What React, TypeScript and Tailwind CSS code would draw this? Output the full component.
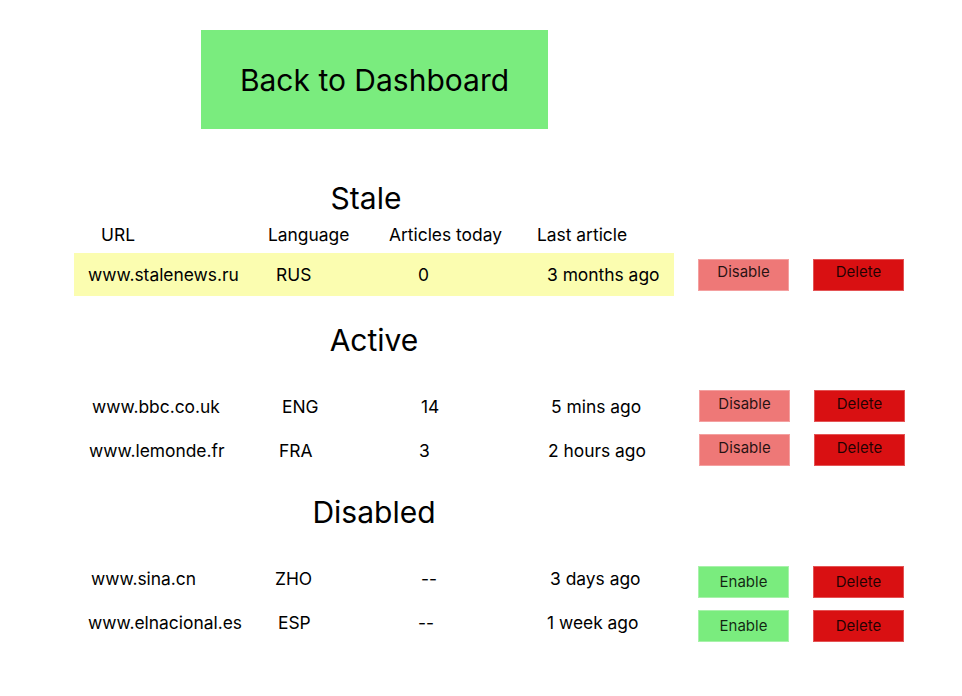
import React from 'react';

type Row = {
  url: string;
  lang: string;
  count: string;
  last: string;
  // per-cell left padding, the wireframe isn't perfectly aligned
  pads: [string, string, string, string];
};

const staleRows: Row[] = [
  { url: 'www.stalenews.ru', lang: 'RUS', count: '0', last: '3 months ago', pads: ['pl-[14px]', 'pl-[14px]', 'pl-[36px]', 'pl-[25px]'] },
];

const activeRows: Row[] = [
  { url: 'www.bbc.co.uk', lang: 'ENG', count: '14', last: '5 mins ago', pads: ['pl-[17px]', 'pl-[19px]', 'pl-[38px]', 'pl-[28px]'] },
  { url: 'www.lemonde.fr', lang: 'FRA', count: '3', last: '2 hours ago', pads: ['pl-[14px]', 'pl-[16px]', 'pl-[36px]', 'pl-[25px]'] },
];

const disabledRows: Row[] = [
  { url: 'www.sina.cn', lang: 'ZHO', count: '--', last: '3 days ago', pads: ['pl-[17px]', 'pl-[13px]', 'pl-[39px]', 'pl-[28px]'] },
  { url: 'www.elnacional.es', lang: 'ESP', count: '--', last: '1 week ago', pads: ['pl-[14px]', 'pl-[16px]', 'pl-[36px]', 'pl-[25px]'] },
];

function Cells({ row }: { row: Row }) {
  return (
    <>
      <div className={`w-[188px] ${row.pads[0]}`}>{row.url}</div>
      <div className={`w-[120px] ${row.pads[1]}`}>{row.lang}</div>
      <div className={`w-[140px] ${row.pads[2]}`}>{row.count}</div>
      <div className={`w-[152px] ${row.pads[3]}`}>{row.last}</div>
    </>
  );
}

function Actions({ enabled }: { enabled: boolean }) {
  return (
    <div className="flex gap-6 text-[15px] text-black/85">
      {enabled ? (
        <button className="w-[91px] h-8 bg-[#ee7877] border border-[#f4a0a0] flex items-center justify-center pb-1">
          Disable
        </button>
      ) : (
        <button className="w-[91px] h-8 bg-[#7aec7e] border border-[#a8f2aa] flex items-center justify-center">
          Enable
        </button>
      )}
      <button className={`w-[91px] h-8 bg-[#d91012] border border-[#e45455] flex items-center justify-center ${enabled ? 'pb-1' : ''}`}>
        Delete
      </button>
    </div>
  );
}

function Heading({ children, className = '' }: { children: React.ReactNode; className?: string }) {
  return (
    <h2 className={`w-[600px] text-center text-[30px] leading-[34px] ${className}`}>{children}</h2>
  );
}

export default function App() {
  return (
    <div className="w-[962px] h-[696px] bg-white text-black font-['Inter','Liberation_Sans',sans-serif] overflow-hidden">
      <div className="pt-[30px] pl-[201px]">
        <button className="w-[347px] h-[99px] bg-[#7aec7e] text-[30px] flex items-center justify-center pt-0.5">
          Back to Dashboard
        </button>
      </div>

      <div className="pl-[74px] text-[17.4px]">
        {/* Stale */}
        <Heading className="mt-[52px] pr-4">Stale</Heading>
        <div className="mt-[10px] flex h-5 leading-5">
          <div className="w-[188px] pl-[27px]">URL</div>
          <div className="w-[120px] pl-[6px]">Language</div>
          <div className="w-[140px] pl-[7px]">Articles today</div>
          <div className="w-[152px] pl-[15px]">Last article</div>
        </div>
        {staleRows.map((row) => (
          <div key={row.url} className="mt-2 flex items-center gap-6">
            <div className="w-[600px] h-[43px] bg-[#fbfdb0] flex items-center pt-0.5">
              <Cells row={row} />
            </div>
            <Actions enabled />
          </div>
        ))}

        {/* Active */}
        <Heading className="mt-[27px]">Active</Heading>
        <div className="mt-[33px] flex flex-col gap-3">
          {activeRows.map((row) => (
            <div key={row.url} className="flex items-center gap-6 pl-px">
              <div className="w-[600px] h-8 flex items-center pt-0.5">
                <Cells row={row} />
              </div>
              <Actions enabled />
            </div>
          ))}
        </div>

        {/* Disabled */}
        <Heading className="mt-[29px]">Disabled</Heading>
        <div className="mt-[37px] flex flex-col gap-3">
          {disabledRows.map((row) => (
            <div key={row.url} className="flex items-center gap-6">
              <div className="w-[600px] h-8 flex items-center pb-[6px]">
                <Cells row={row} />
              </div>
              <Actions enabled={false} />
            </div>
          ))}
        </div>
      </div>
    </div>
  );
}
